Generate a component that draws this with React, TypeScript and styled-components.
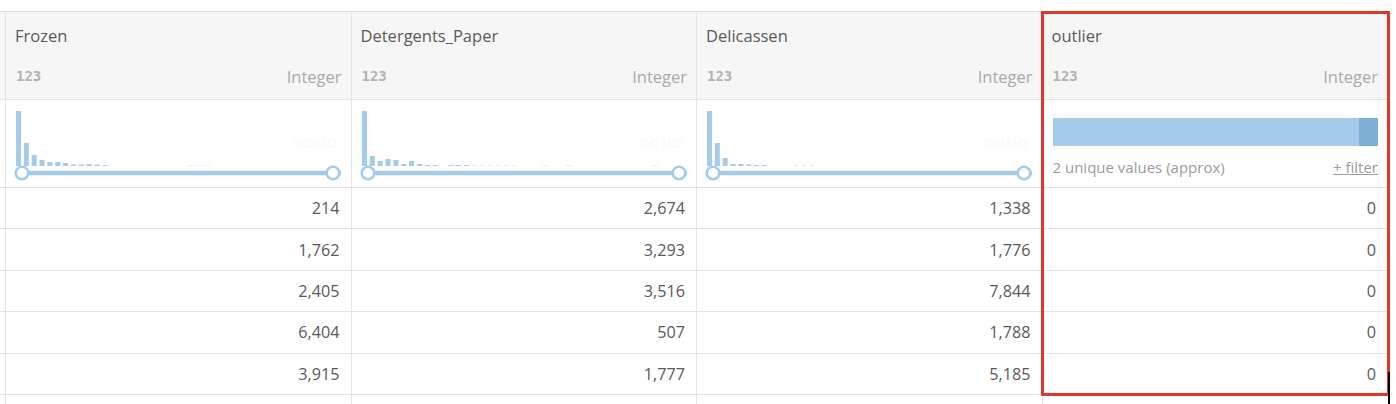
import styled, { createGlobalStyle } from "styled-components";

const GlobalStyle = createGlobalStyle`
  html, body {
    margin: 0;
    padding: 0;
    background: #ffffff;
    overflow: hidden;
  }
  body {
    font-family: "Open Sans", "Liberation Sans", sans-serif;
  }
`;

const COL = 345.5;
const BAR_STEP = 7.85;
const BLUE = "#a5cbea";
const BLUE_DARK = "#7eb0d6";
const LINE = "#e4e4e4";

const Page = styled.div`
  position: relative;
  width: 1396px;
  height: 404px;
  padding-top: 11px;
  box-sizing: border-box;
  overflow: hidden;
`;

const Row = styled.div<{ $height: number; $shaded?: boolean }>`
  display: grid;
  grid-template-columns: 5px repeat(4, ${COL}px);
  width: ${5 + COL * 4}px;
  height: ${(p) => p.$height}px;
  box-sizing: border-box;
  border-bottom: 1px solid ${LINE};
  background: ${(p) => (p.$shaded ? "#f6f6f6" : "#ffffff")};
`;

const HeaderRow = styled(Row)`
  border-top: 1px solid #dcdcdc;
`;

const Cell = styled.div<{ $first?: boolean }>`
  border-left: ${(p) => (p.$first ? "none" : `1px solid ${LINE}`)};
  min-width: 0;
  box-sizing: border-box;
`;

const HeaderCell = styled(Cell)`
  display: flex;
  flex-direction: column;
  padding: 12px 9px 0 9px;
`;

const ColumnName = styled.div`
  font-size: 16.5px;
  color: #595959;
  height: 24px;
  line-height: 24px;
`;

const TypeLine = styled.div`
  display: flex;
  justify-content: space-between;
  align-items: center;
  height: 24px;
  margin-top: 16px;
`;

const TypeIcon = styled.span`
  font-family: "DejaVu Sans Mono", monospace;
  font-weight: bold;
  font-size: 14px;
  color: #b2b2b2;
  padding-left: 1px;
`;

const TypeName = styled.span`
  font-size: 16.5px;
  color: #a9a9a9;
`;

const HistCell = styled(Cell)`
  padding-top: 4px;
`;

const UniqueCell = styled(Cell)`
  display: flex;
  flex-direction: column;
  padding: 18px 9px 0 10px;
`;

const ValueBar = styled.div`
  display: flex;
  height: 28px;
  background: ${BLUE};
  justify-content: flex-end;
`;

const ValueBarTail = styled.div`
  width: 19px;
  background: ${BLUE_DARK};
`;

const UniqueLine = styled.div`
  display: flex;
  justify-content: space-between;
  margin-top: 11px;
  font-size: 15px;
  color: #9b9b9b;
`;

const FilterLink = styled.a`
  color: #9b9b9b;
  text-decoration: underline;
  cursor: pointer;
`;

const ValueCell = styled(Cell)`
  display: flex;
  align-items: center;
  justify-content: flex-end;
  padding-right: 11px;
  font-size: 16.2px;
  color: #595959;
`;

const Highlight = styled.div`
  position: absolute;
  left: 1041px;
  top: 11px;
  width: 349px;
  height: 385px;
  border: 3px solid #e3362a;
  box-sizing: border-box;
  pointer-events: none;
`;

const Caret = styled.div`
  position: absolute;
  left: 1388px;
  top: 372px;
  width: 2px;
  height: 32px;
  background: #000000;
`;

type Column = {
  name: string;
  bars?: number[];
  values: string[];
};

const columns: Column[] = [
  {
    name: "Frozen",
    bars: [55, 23, 11, 6, 4, 4, 3, 1.5, 1.5, 2, 1.5, 1, 0, 0, 0, 0, 0, 0, 0, 0, 0, 0, 0.6, 0.6, 0.6],
    values: ["214", "1,762", "2,405", "6,404", "3,915", ""],
  },
  {
    name: "Detergents_Paper",
    bars: [55, 10, 5, 7, 6, 2, 5, 2, 1, 1, 0, 1, 1, 1, 0.6, 0.6, 0.6, 0.6, 0.6, 0.6, 0, 0, 0, 0.6, 0, 0, 0.6, 0, 0, 0, 0, 0, 0, 0, 0, 0, 0, 0.6],
    values: ["2,674", "3,293", "3,516", "507", "1,777", ""],
  },
  {
    name: "Delicassen",
    bars: [55, 23, 8, 2, 2, 1.5, 1, 1, 0, 0, 0, 0.6, 0.6, 0.6],
    values: ["1,338", "1,776", "7,844", "1,788", "5,185", ""],
  },
  {
    name: "outlier",
    values: ["0", "0", "0", "0", "0", ""],
  },
];

function Histogram({ bars }: { bars: number[] }) {
  const base = 62;
  return (
    <svg width={340} height={80}>
      <text x={288} y={44} fontSize={12} fontWeight={700} fill="#fafafa" letterSpacing={1}>
        DOMO
      </text>
      {bars.map((h, i) =>
        h > 0 ? (
          <rect
            key={i}
            x={10 + i * BAR_STEP}
            y={base - h}
            width={5}
            height={h}
            fill={BLUE}
            opacity={h < 1 ? 0.55 : 1}
          />
        ) : null
      )}
      <line x1={16} y1={69} x2={335} y2={69} stroke={BLUE} strokeWidth={4.5} />
      <circle cx={16} cy={69} r={6.3} fill="#ffffff" stroke={BLUE} strokeWidth={2.6} />
      <circle cx={327} cy={69} r={6.3} fill="#ffffff" stroke={BLUE} strokeWidth={2.6} />
    </svg>
  );
}

export default function App() {
  return (
    <Page>
      <GlobalStyle />
      <HeaderRow $height={89} $shaded>
        <Cell $first />
        {columns.map((c) => (
          <HeaderCell key={c.name}>
            <ColumnName>{c.name}</ColumnName>
            <TypeLine>
              <TypeIcon>123</TypeIcon>
              <TypeName>Integer</TypeName>
            </TypeLine>
          </HeaderCell>
        ))}
      </HeaderRow>
      <Row $height={88}>
        <Cell $first />
        {columns.map((c) =>
          c.bars ? (
            <HistCell key={c.name}>
              <Histogram bars={c.bars} />
            </HistCell>
          ) : (
            <UniqueCell key={c.name}>
              <ValueBar>
                <ValueBarTail />
              </ValueBar>
              <UniqueLine>
                <span>2 unique values (approx)</span>
                <FilterLink>+ filter</FilterLink>
              </UniqueLine>
            </UniqueCell>
          )
        )}
      </Row>
      {columns[0].values.map((_, r) => (
        <Row key={r} $height={41.4}>
          <Cell $first />
          {columns.map((c) => (
            <ValueCell key={c.name}>{c.values[r]}</ValueCell>
          ))}
        </Row>
      ))}
      <Highlight />
      <Caret />
    </Page>
  );
}
